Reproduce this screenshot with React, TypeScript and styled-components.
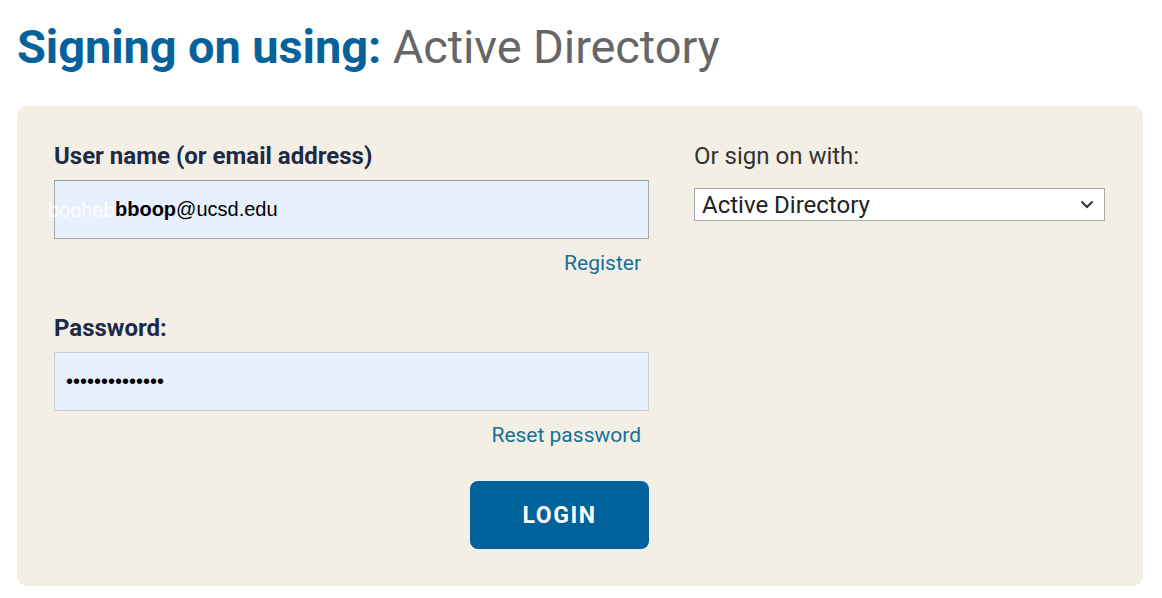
import React from 'react';
import styled, { createGlobalStyle } from 'styled-components';

const GlobalStyle = createGlobalStyle`
  html, body {
    margin: 0;
    padding: 0;
    background: #ffffff;
    font-family: Roboto, 'Liberation Sans', sans-serif;
  }
`;

const Page = styled.main`
  padding: 13px 19px 0 17px;
`;

const Title = styled.h1`
  margin: 0 0 26px;
  font-size: 47px;
  line-height: 67px;
  font-weight: 400;
  color: #666666;
  letter-spacing: -0.1px;

  & strong {
    font-weight: 700;
    color: #07629c;
  }
`;

const Panel = styled.section`
  box-sizing: border-box;
  width: 1126px;
  height: 480px;
  background: #f3efe4;
  border-radius: 10px;
  padding: 35px 0 0 37px;
  display: grid;
  grid-template-columns: 595px 411px;
  column-gap: 45px;
  align-items: start;
`;

const Column = styled.div`
  display: flex;
  flex-direction: column;
`;

const Label = styled.label`
  font-size: 24px;
  line-height: 30px;
  font-weight: 700;
  color: #1c2a48;
  margin-bottom: 9px;
`;

const Field = styled.div`
  box-sizing: border-box;
  position: relative;
  height: 59px;
  background: #e8f0fe;
  border: 1px solid #a6a6a6;
  border-top-color: #9a9a9a;
  display: flex;
  align-items: center;
  padding-left: 60px;
  font-family: 'Liberation Sans', Arial, sans-serif;
  font-size: 20px;
  color: #000000;
`;

const PasswordField = styled(Field)`
  border-color: #c9ccd3;
  padding-left: 11px;
  font-size: 20px;
`;

// autofill preview text that bleeds past the left edge of the box
const Ghost = styled.span`
  position: absolute;
  left: -7px;
  top: 50%;
  transform: translateY(-50%);
  color: rgba(255, 255, 255, 0.95);
  font-size: 20px;
`;

const Typed = styled.span`
  & b {
    font-weight: 700;
  }
`;

const LinkRow = styled.div`
  display: flex;
  justify-content: flex-end;
  padding: 10px 8px 0 0;
  margin-bottom: 36px;
`;

const TextLink = styled.a`
  font-size: 21px;
  line-height: 28px;
  color: #17709a;
  text-decoration: none;
`;

const Actions = styled.div`
  display: flex;
  justify-content: flex-end;
  margin-top: -4px;
`;

const LoginButton = styled.button`
  width: 179px;
  height: 68px;
  border: none;
  border-radius: 8px;
  background: #00629b;
  color: #ffffff;
  font-family: Roboto, 'Liberation Sans', sans-serif;
  font-size: 23px;
  font-weight: 700;
  letter-spacing: 1.6px;
  cursor: pointer;
`;

const AltLabel = styled.div`
  font-size: 24px;
  line-height: 30px;
  color: #333333;
  margin-bottom: 17px;
`;

const Select = styled.div`
  box-sizing: border-box;
  height: 33px;
  background: #ffffff;
  border: 1px solid #a9a9a9;
  display: flex;
  align-items: center;
  justify-content: space-between;
  padding: 0 10px 0 7px;
  font-size: 24px;
  color: #222222;
`;

const Chevron = () => (
  <svg width="14" height="9" viewBox="0 0 14 9" fill="none">
    <path d="M1.5 1.5 7 7l5.5-5.5" stroke="#333" strokeWidth="2" />
  </svg>
);

export default function App() {
  return (
    <>
      <GlobalStyle />
      <Page>
        <Title>
          <strong>Signing on using:</strong> Active Directory
        </Title>
        <Panel>
          <Column>
            <Label>User name (or email address)</Label>
            <Field>
              <Ghost>booheb</Ghost>
              <Typed>
                <b>bboop</b>@ucsd.edu
              </Typed>
            </Field>
            <LinkRow>
              <TextLink href="#">Register</TextLink>
            </LinkRow>
            <Label>Password:</Label>
            <PasswordField>••••••••••••••</PasswordField>
            <LinkRow>
              <TextLink href="#">Reset password</TextLink>
            </LinkRow>
            <Actions>
              <LoginButton type="button">LOGIN</LoginButton>
            </Actions>
          </Column>
          <Column>
            <AltLabel>Or sign on with:</AltLabel>
            <Select>
              <span>Active Directory</span>
              <Chevron />
            </Select>
          </Column>
        </Panel>
      </Page>
    </>
  );
}
